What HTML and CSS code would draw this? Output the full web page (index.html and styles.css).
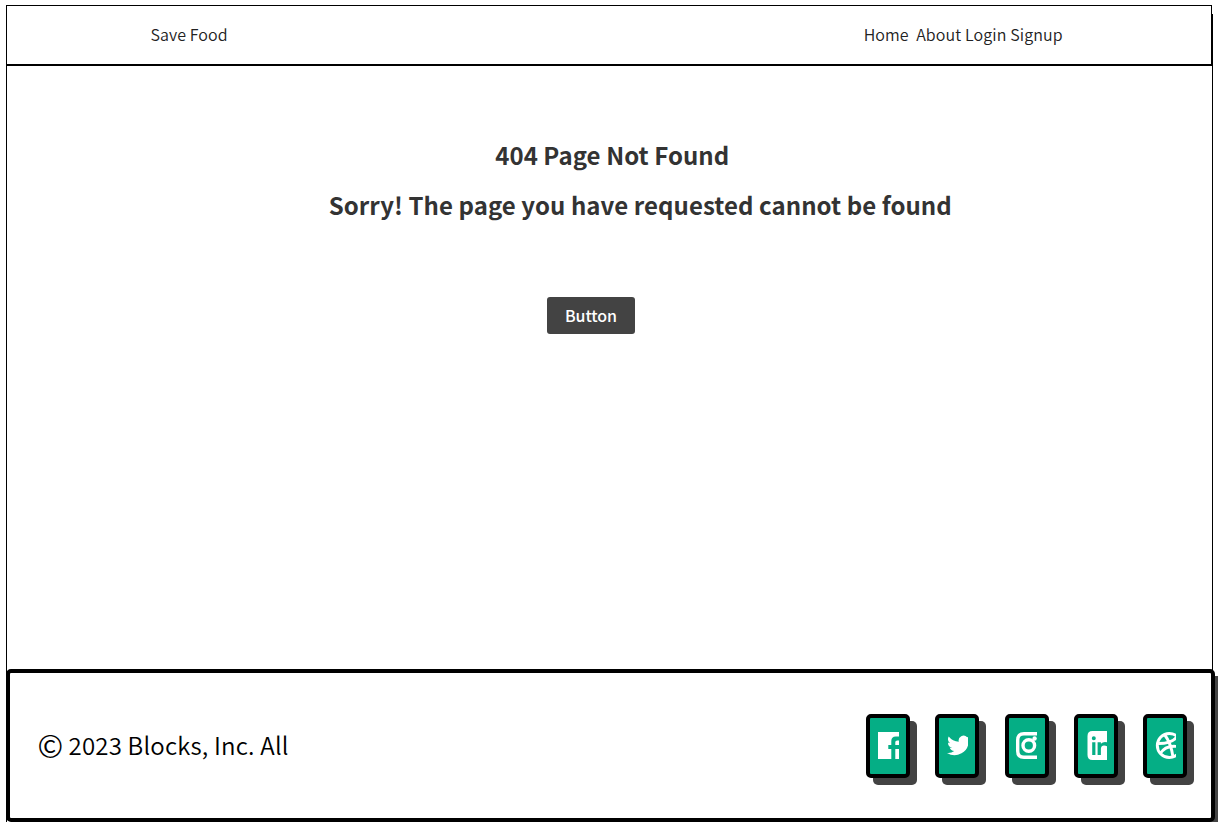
FILE: index.html
```html
<!DOCTYPE html>
<html lang="en">
<head>
<meta charset="utf-8">
<title>404 Page Not Found</title>
<link rel="stylesheet" href="styles.css">
</head>
<body>
<div class="page">
  <header class="navbar">
    <span class="brand">Save Food</span>
    <nav class="links"><a class="home">Home</a><a>About</a><a>Login</a><a>Signup</a></nav>
  </header>
  <main class="content">
    <h1 class="title">404 Page Not Found</h1>
    <h2 class="message">Sorry! The page you have requested cannot be found</h2>
    <button class="action">Button</button>
  </main>
  <footer class="footer">
    <p class="copyright"><span class="mark">©</span><span>2023 Blocks, Inc. All</span></p>
    <div class="social">
      <a class="tile"><svg viewBox="0.400 0 21 27"><path d="M0.500 0H26V27H17.700V17H22V13H17.700V10Q17.700 8.500 19.700 8.500H22V4.500H18.200Q13.700 4.500 13.700 9V13H10.700V17H13.700V27H0.500Q-.5 27 -.5 26V1Q-.5 0 .5 0Z"/></svg></a>
      <a class="tile"><svg viewBox="0 0 21 27"><path d="M24 5.500a10 10 0 0 1-2.800.800 5 5 0 0 0 2.100-2.700 10 10 0 0 1-3.100 1.200 4.900 4.900 0 0 0-8.400 4.500A14 14 0 0 1 1.700 4.100a4.900 4.900 0 0 0 1.500 6.600 5 5 0 0 1-2.200-.600 4.900 4.900 0 0 0 3.900 4.900 5 5 0 0 1-2.200.100 4.900 4.900 0 0 0 4.600 3.400A9.900 9.900 0 0 1 0 20.500 14 14 0 0 0 21.500 8.100 10 10 0 0 0 24 5.500Z" transform="translate(0 .5)"/></svg></a>
      <a class="tile"><svg viewBox="0 0 21 27"><g class="line"><path d="M24 1.700H8Q1.700 1.700 1.700 8V19Q1.700 25.300 8 25.300H24"/><circle cx="12.800" cy="13.500" r="5.800"/></g><circle cx="18.600" cy="6.500" r="2.200"/></svg></a>
      <a class="tile"><svg viewBox="0 -1 21 29"><path fill-rule="evenodd" d="M6.500 -1H21.500V10.500Q20.500 10 19 10 16.500 10 14.900 11.800V10.300H11.600V23H14.900V16.500Q15.200 13.500 18 13.500 20 13.500 21.500 14.500V28H6.500Q1.500 28 1.500 23V4Q1.500 -1 6.500 -1ZM6.200 10.300V23H9.400V10.300ZM7.800 4.300A2 2 0 1 0 7.800 8.300 2 2 0 1 0 7.800 4.300Z"/></svg></a>
      <a class="tile"><svg viewBox="0 0 21 27"><g class="line thin"><circle cx="14.300" cy="13.500" r="12"/><path d="M9.500 2.500Q16 11 18 25M2 11.500Q16 12 22 5M5 22Q11 12 25 15"/></g></svg></a>
    </div>
  </footer>
</div>
</body>
</html>
```
FILE: styles.css
```css
* { box-sizing: border-box; }
html, body { margin: 0; height: 822px; overflow: hidden; background: #fff; }
body { font-family: "Noto Sans CJK JP", "Noto Sans", sans-serif; color: #333; padding: 5px 5px 0 6px; }
.page { width: 1207px; height: 817px; border-left: 1px solid #000; background: linear-gradient(#000, #000) right 0 top 9px / 1px 100% no-repeat; display: flex; flex-direction: column; }
.navbar { height: 61px; width: 1206px; margin-left: -1px; flex: none; border: 1px solid #000; border-bottom-width: 2px; display: flex; justify-content: space-between; align-items: center; padding: 0 148.400px 3px 143.500px; font-size: 16px; font-weight: 350; letter-spacing: 0.080px; color: #222; }
.links { display: flex; gap: 3.900px; }
.home { margin-right: 3.500px; }
.content { flex: none; height: 603px; display: flex; flex-direction: column; align-items: flex-start; }
.title, .message { margin: 0; font-size: 24px; line-height: 36px; font-weight: 700; letter-spacing: 0.060px; white-space: nowrap; }
.title { margin: 71px 0 0 488.200px; }
.message { margin: 14px 0 0 321.700px; }
.action { margin: 74px 0 0 540px; width: 88px; height: 37px; border: 0; border-radius: 3px; background: #434343; color: #fff; font: 500 16px "Noto Sans CJK JP", sans-serif; letter-spacing: -0.080px; padding: 0 0 2px; }
.footer { flex: none; width: 1209px; height: 153px; margin-left: -1px; border: 4px solid #000; border-radius: 5px; box-shadow: 7px 7px 0 #434343; background: #fff; display: flex; justify-content: space-between; align-items: center; padding: 0 23.700px 0 28px; }
.copyright { display: flex; align-items: center; gap: 5.600px; margin: 0 0 2px; font-size: 24px; line-height: 36px; font-weight: 350; letter-spacing: 0.190px; color: #000; }
.mark { width: 25px; display: flex; justify-content: center; font-size: 31px; padding-top: 1px; }
.social { display: flex; gap: 25.300px; }
.tile { width: 44px; height: 64px; border: 4px solid #000; border-radius: 5px; background: #05ae85; box-shadow: 7px 7px 0 #434343; display: flex; align-items: center; justify-content: center; }
.tile svg { width: 21px; height: 29px; overflow: hidden; fill: #fff; }
.line { fill: none; stroke: #fff; stroke-width: 3.400; }
.thin { stroke-width: 2.900; }
```
